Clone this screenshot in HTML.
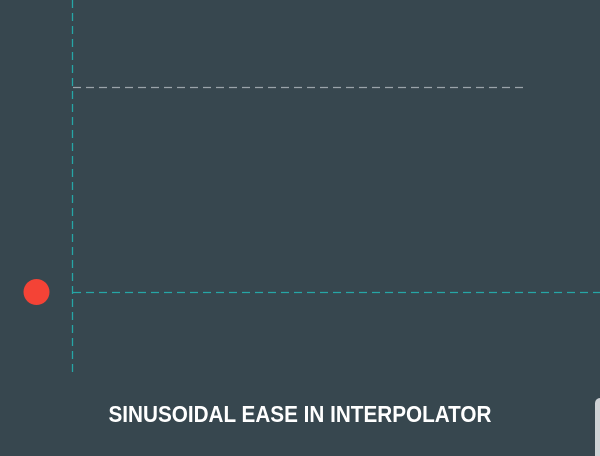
<!DOCTYPE html>
<html><head><style>
html,body{margin:0;padding:0;width:600px;height:456px;overflow:hidden;background:#37474f;}
.t{position:absolute;left:0;width:600px;top:401px;text-align:center;color:#fff;font:bold 23px "Liberation Sans",sans-serif;transform:scaleX(0.9);}
</style></head><body>
<svg width="600" height="456" style="position:absolute;left:0;top:0">
<line x1="72.5" y1="0" x2="72.5" y2="377" stroke="#26a6a6" stroke-width="1.3" stroke-dasharray="8,5"/>
<line x1="73" y1="87.5" x2="528" y2="87.5" stroke="#9aa4aa" stroke-width="1.3" stroke-dasharray="8,5"/>
<line x1="73" y1="292.5" x2="600" y2="292.5" stroke="#26a6a6" stroke-width="1.3" stroke-dasharray="8,5"/>
<circle cx="36.5" cy="292" r="13" fill="#f44336"/>
<rect x="595" y="398" width="12" height="70" rx="5" fill="#cfd3d6"/>
</svg>
<div class="t">SINUSOIDAL EASE IN INTERPOLATOR</div>
</body></html>
